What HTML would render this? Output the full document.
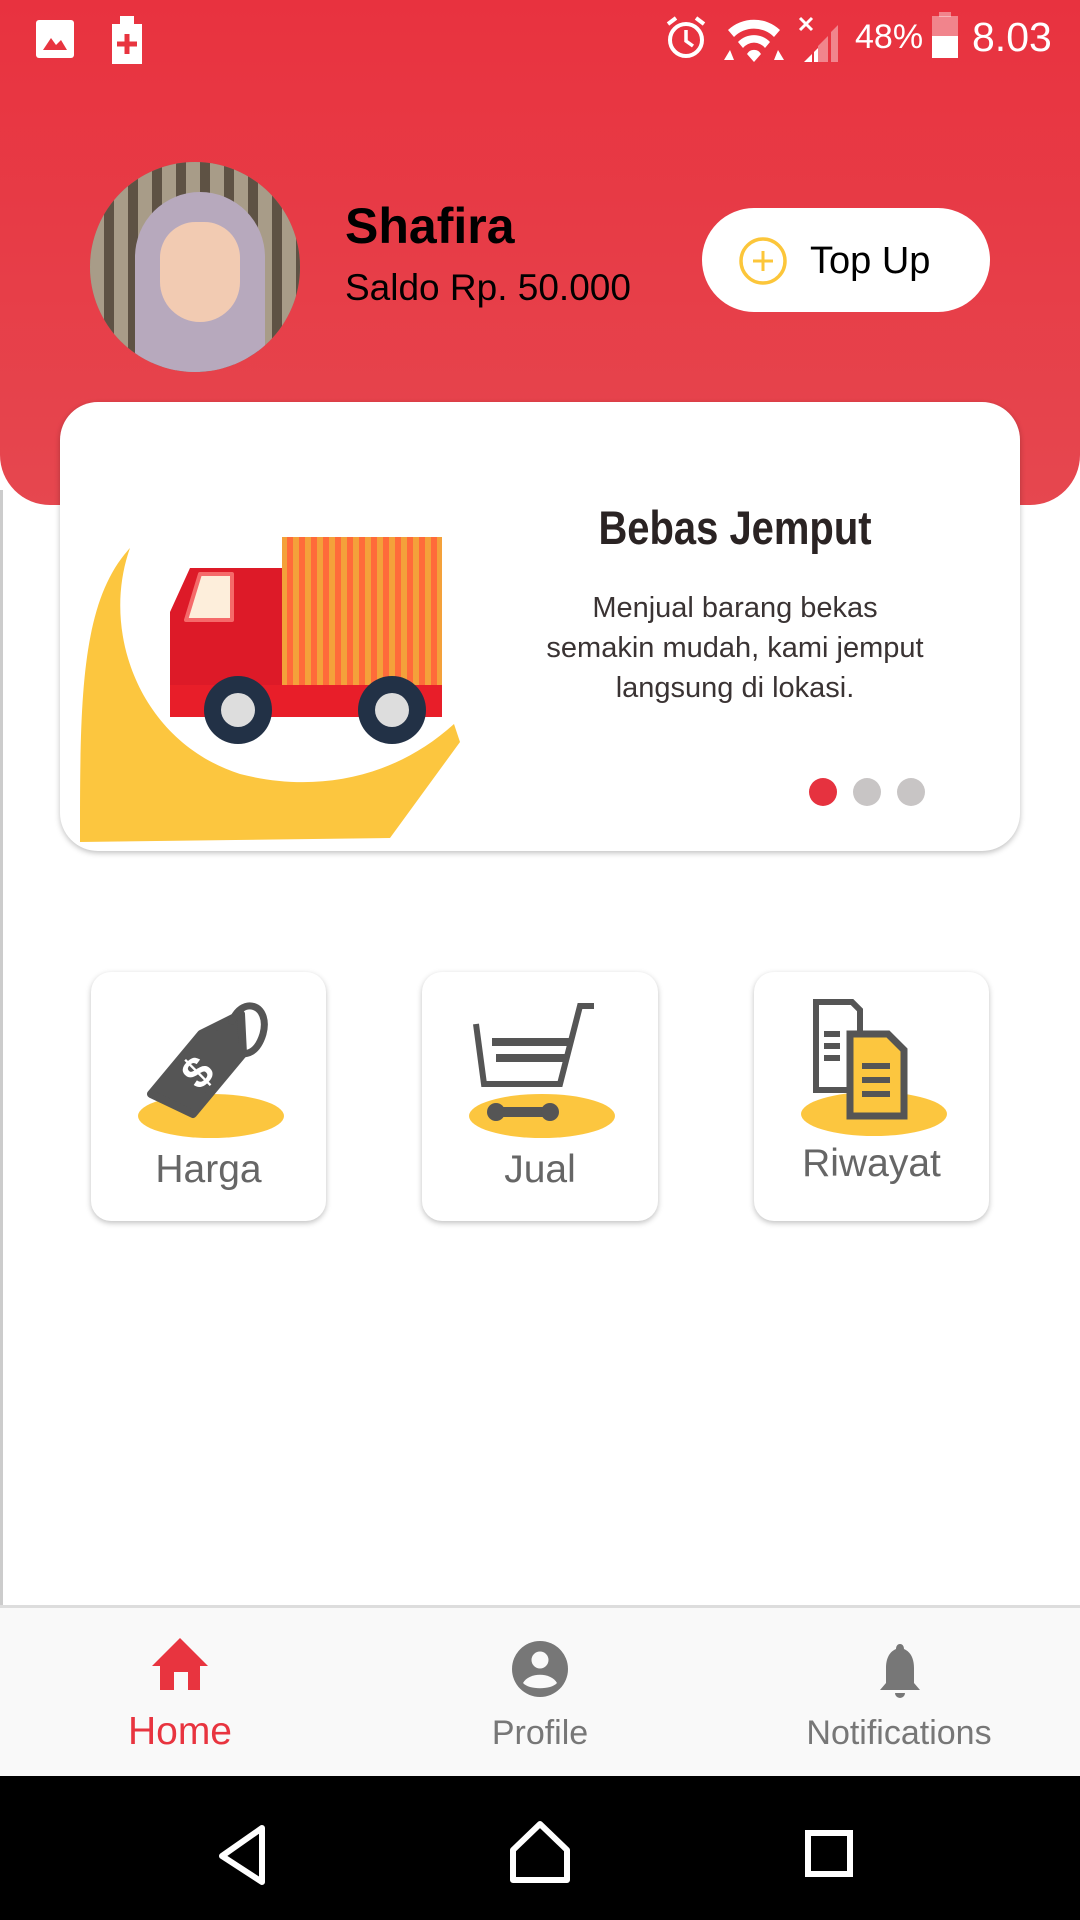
<!DOCTYPE html>
<html><head><meta charset="utf-8"><style>
*{margin:0;padding:0;box-sizing:border-box}
body{width:1080px;height:1920px;position:relative;overflow:hidden;background:#fff;font-family:"Liberation Sans",sans-serif}
.abs{position:absolute}
.hdr{left:0;top:0;width:1080px;height:505px;background:linear-gradient(#e8323f,#e6474f);border-radius:0 0 50px 50px}
.sb{color:#fff;font-size:36px}
.card{background:#fff;border-radius:20px;box-shadow:0 2px 6px rgba(0,0,0,.25)}
.lbl{width:100%;text-align:center;color:#666;font-size:39px}
.nav{font-size:34px;color:#777;text-align:center;width:300px}
</style></head><body>
<div class="abs" style="left:0;top:490px;width:3px;height:1115px;background:#ccc"></div>
<div class="abs hdr"></div>
<!-- status bar -->
<svg class="abs" style="left:34px;top:16px" width="110" height="48"><rect x="2" y="4" width="38" height="38" rx="3" fill="#fff"/><path d="M9 34 L17 22 L22 29 L27 24 L33 34Z" fill="#e8343f"/><rect x="78" y="8" width="30" height="40" fill="#fff"/><rect x="86" y="0" width="14" height="8" fill="#fff"/><path d="M93 18v20M83 28h20" stroke="#e8343f" stroke-width="5"/></svg>
<svg class="abs" style="left:660px;top:12px" width="190" height="50"><circle cx="26" cy="28" r="16" fill="none" stroke="#fff" stroke-width="4"/><path d="M26 18v11l7 5" stroke="#fff" stroke-width="3.5" fill="none"/><path d="M8 12l8-6M44 12l-8-6" stroke="#fff" stroke-width="4"/><path d="M68 18a38 38 0 0 1 52 0l-6 7a28 28 0 0 0-40 0zM78 30a22 22 0 0 1 32 0l-5 6a14 14 0 0 0-22 0zM87 42a8 8 0 0 1 14 0l-7 8z" fill="#fff"/><path d="M64 48l6-10 4 10zM124 48l-6-10-4 10z" fill="#fff"/><path d="M140 6l12 12M152 6l-12 12" stroke="#fff" stroke-width="3"/><path d="M138 56l14-14v14z" fill="#fff"/><path d="M158 56v-22l10-10v32zM171 56v-36l7-7v43z" fill="#fff" opacity=".4"/><path d="M154 56v-16l4-4v20z" fill="#fff"/></svg>
<div class="abs sb" style="left:855px;top:18px;font-size:34px">48%</div>
<svg class="abs" style="left:930px;top:12px" width="30" height="46"><rect x="9" y="0" width="12" height="5" fill="#fff" opacity=".4"/><rect x="2" y="4" width="26" height="20" fill="#fff" opacity=".4"/><rect x="2" y="24" width="26" height="22" fill="#fff"/></svg>
<div class="abs sb" style="left:972px;top:14px;font-size:41px">8.03</div>
<!-- avatar -->
<div class="abs" style="left:90px;top:162px;width:210px;height:210px;border-radius:50%;overflow:hidden;background:#8a7a68">
<div class="abs" style="left:0;top:0;width:210px;height:210px;background:repeating-linear-gradient(90deg,#a89c88 0 14px,#5e5244 14px 24px)"></div>
<div class="abs" style="left:45px;top:30px;width:130px;height:200px;border-radius:65px 65px 20px 20px;background:#b7a9bd"></div>
<div class="abs" style="left:70px;top:60px;width:80px;height:100px;border-radius:40px 40px 45px 45px;background:#f2cbb2"></div>
</div>
<div class="abs" style="left:345px;top:197px;font-size:50px;font-weight:bold;color:#000">Shafira</div>
<div class="abs" style="left:345px;top:267px;font-size:37px;color:#000">Saldo Rp. 50.000</div>
<div class="abs" style="left:702px;top:208px;width:288px;height:104px;border-radius:52px;background:#fff"></div>
<svg class="abs" style="left:738px;top:236px" width="50" height="50"><circle cx="25" cy="25" r="22" fill="none" stroke="#fcc63a" stroke-width="3.5"/><path d="M25 15v20M15 25h20" stroke="#fcc63a" stroke-width="3"/></svg>
<div class="abs" style="left:810px;top:240px;font-size:38px;color:#000">Top Up</div>
<!-- banner -->
<div class="abs" style="left:60px;top:402px;width:960px;height:449px;background:#fff;border-radius:38px;box-shadow:0 2px 6px rgba(0,0,0,.25);overflow:hidden">
<svg class="abs" style="left:0;top:0" width="420" height="449"><path d="M70 146 C20 200 20 300 20 440 L330 436 L400 340 L394 322 C330 380 250 390 180 372 C80 340 40 230 70 146Z" fill="#fcc63f"/>
<rect x="222" y="135" width="160" height="148" fill="#f4a13a"/><path d="M230 135v148M242 135v148M254 135v148M266 135v148M278 135v148M290 135v148M302 135v148M314 135v148M326 135v148M338 135v148M350 135v148M362 135v148M374 135v148" stroke="#ff6b3a" stroke-width="6"/>
<path d="M110 210 L130 166 H222 V305 H110Z" fill="#dd1a28"/><rect x="110" y="283" width="272" height="32" fill="#e81e29"/><path d="M140 172h32v46h-46z" fill="#fdeedb" stroke="#f56a6a" stroke-width="4" stroke-linejoin="round"/>
<circle cx="178" cy="308" r="34" fill="#223146"/><circle cx="178" cy="308" r="17" fill="#ddd"/><circle cx="332" cy="308" r="34" fill="#223146"/><circle cx="332" cy="308" r="17" fill="#ddd"/></svg>
<div class="abs" style="left:430px;top:98px;width:490px;text-align:center;font-size:47px;font-weight:bold;color:#2a2323;transform:scaleX(.85)">Bebas Jemput</div>
<div class="abs" style="left:440px;top:186px;width:470px;text-align:center;font-size:29px;line-height:40px;color:#3a3333">Menjual barang bekas<br>semakin mudah, kami jemput<br>langsung di lokasi.</div>
<div class="abs" style="left:749px;top:376px;width:28px;height:28px;border-radius:50%;background:#e6323f"></div>
<div class="abs" style="left:793px;top:376px;width:28px;height:28px;border-radius:50%;background:#c8c5c5"></div>
<div class="abs" style="left:837px;top:376px;width:28px;height:28px;border-radius:50%;background:#c8c5c5"></div>
</div>
<!-- menu -->
<div class="abs card" style="left:91px;top:972px;width:235px;height:249px">
<svg class="abs" style="left:40px;top:22px" width="160" height="150"><ellipse cx="80" cy="122" rx="73" ry="22" fill="#fcc63f"/><path d="M20 100 L70 40 L110 20 L112 60 L62 120 Z" fill="#555" stroke="#555" stroke-width="8" stroke-linejoin="round"/><path d="M100 30 C110 0 140 10 132 40 C126 60 115 60 110 60" fill="none" stroke="#555" stroke-width="7"/><text x="55" y="95" font-size="44" font-weight="bold" fill="#fff" transform="rotate(-45 65 80)" font-family="Liberation Sans">$</text></svg>
<div class="abs lbl" style="top:176px">Harga</div></div>
<div class="abs card" style="left:422px;top:972px;width:236px;height:249px">
<svg class="abs" style="left:40px;top:22px" width="160" height="150"><ellipse cx="80" cy="122" rx="73" ry="22" fill="#fcc63f"/><path d="M14 30 L22 90 H98 L118 12 H132" fill="none" stroke="#555" stroke-width="6"/><path d="M30 48h78M34 64h70" stroke="#555" stroke-width="8"/><path d="M36 118h50" stroke="#555" stroke-width="10"/><circle cx="34" cy="118" r="9" fill="#555"/><circle cx="88" cy="118" r="9" fill="#555"/></svg>
<div class="abs lbl" style="top:176px">Jual</div></div>
<div class="abs card" style="left:754px;top:972px;width:235px;height:249px">
<svg class="abs" style="left:40px;top:22px" width="160" height="150"><ellipse cx="80" cy="120" rx="73" ry="22" fill="#fcc63f"/><path d="M22 8h36l8 8v80H22z" fill="none" stroke="#555" stroke-width="6"/><path d="M30 40h16M30 52h16M30 64h16" stroke="#555" stroke-width="6"/><path d="M56 40h38l16 16v66H56z" fill="#fcc63f" stroke="#555" stroke-width="7"/><path d="M68 72h28M68 86h28M68 100h28" stroke="#555" stroke-width="6"/></svg>
<div class="abs lbl" style="top:170px">Riwayat</div></div>
<!-- bottom nav -->
<div class="abs" style="left:0;top:1605px;width:1080px;height:171px;background:#f9f9f9;border-top:3px solid #ddd"></div>
<svg class="abs" style="left:152px;top:1636px" width="56" height="56"><path d="M28 2 L56 30 H48 V54 H36 V36 H22 V54 H8 V30 H0Z" fill="#e8343f"/></svg>
<div class="abs nav" style="left:30px;top:1710px;color:#e8343f;font-size:39px">Home</div>
<svg class="abs" style="left:510px;top:1639px" width="60" height="60"><circle cx="30" cy="30" r="28" fill="#777"/><circle cx="30" cy="21" r="8.5" fill="#f9f9f9"/><path d="M13 44 C19 33 41 33 47 44 C41 51 19 51 13 44Z" fill="#f9f9f9"/></svg>
<div class="abs nav" style="left:390px;top:1714px">Profile</div>
<svg class="abs" style="left:876px;top:1642px" width="48" height="62"><path d="M24 2c3 0 4 3 4 5c7 3 10 10 10 19v15l6 7H4l6-7V26c0-9 3-16 10-19c0-2 1-5 4-5z" fill="#777"/><path d="M19 51h10a5 5 0 0 1-10 0z" fill="#777"/></svg>
<div class="abs nav" style="left:749px;top:1714px">Notifications</div>
<div class="abs" style="left:0;top:1776px;width:1080px;height:144px;background:#000"></div>
<svg class="abs" style="left:0;top:1776px" width="1080" height="144"><path d="M262 52 L222 80 L262 106Z" fill="none" stroke="#fff" stroke-width="6" stroke-linejoin="round" transform="translate(0,0)"/><path d="M540 48 L513 74 V104 H567 V74Z" fill="none" stroke="#fff" stroke-width="6" stroke-linejoin="round"/><rect x="808" y="57" width="42" height="41" fill="none" stroke="#fff" stroke-width="6"/></svg>
</body></html>
